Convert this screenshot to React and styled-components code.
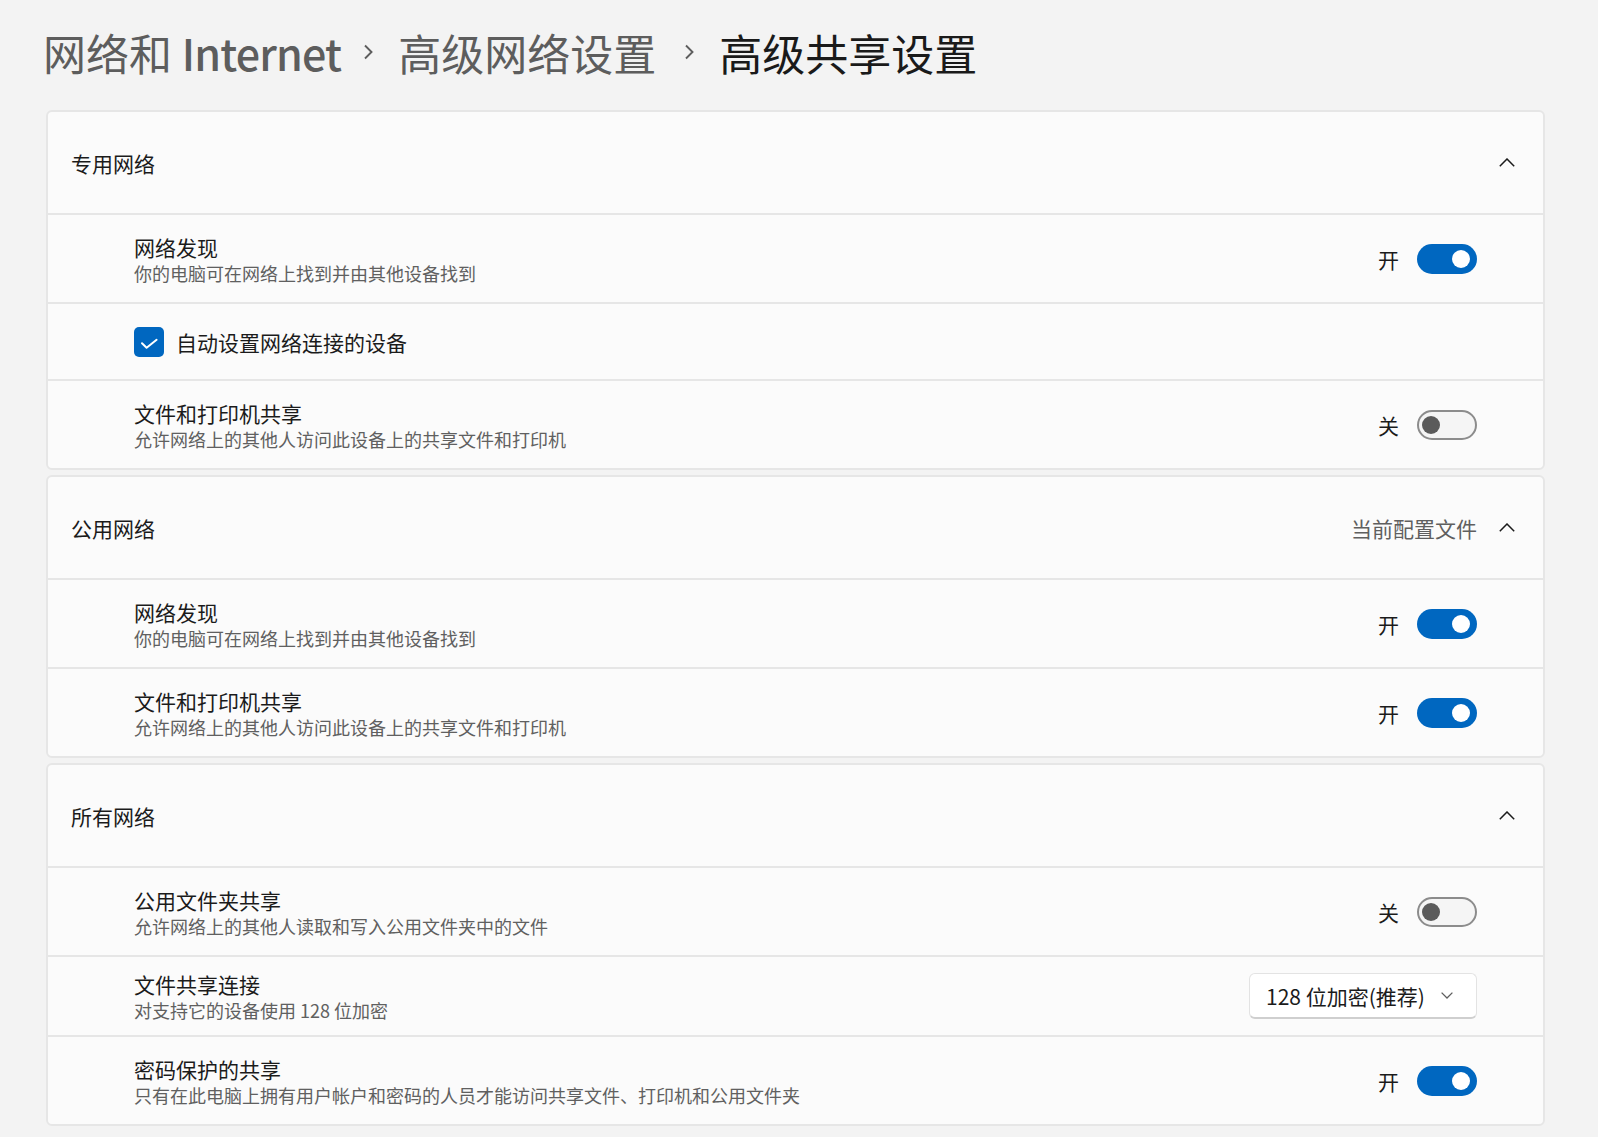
import React from "react";
import styled, { createGlobalStyle } from "styled-components";

const Global = createGlobalStyle`
  html, body {
    margin: 0;
    padding: 0;
    background: #f3f3f3;
  }
  body {
    font-family: "Noto Sans CJK SC", "Noto Sans", sans-serif;
    color: #1b1b1b;
    -webkit-font-smoothing: antialiased;
  }
  * { box-sizing: border-box; }
`;

const Page = styled.div`
  padding: 28px 53px 10px 46px;
  min-height: 1137px;
`;

const Breadcrumb = styled.div`
  display: flex;
  align-items: center;
  height: 48px;
  margin: 0 0 34px -3px;
  font-size: 43px;
  line-height: 48px;
`;

const Crumb = styled.span`
  color: ${(p) => (p.$current ? "#1a1a1a" : "#5d5d5d")};
  white-space: nowrap;
`;

const Latin = styled.span`
  font-weight: 500;
  letter-spacing: -0.8px;
`;

const SepIcon = styled.svg`
  width: 10px;
  height: 16px;
  margin: 0 25px 0 ${(p) => p.$left}px;
  flex: none;
`;

const Cards = styled.div`
  display: flex;
  flex-direction: column;
  gap: 5px;
`;

const Card = styled.section`
  background: #fbfbfb;
  border: 2px solid #e6e6e6;
  border-radius: 6px;
  overflow: hidden;
`;

const Header = styled.div`
  height: 101px;
  display: flex;
  align-items: center;
  justify-content: space-between;
  padding: 0 28px 0 23px;
`;

const HeaderTitle = styled.div`
  font-size: 21px;
  line-height: 28px;
  color: #1b1b1b;
`;

const HeaderRight = styled.div`
  display: flex;
  align-items: center;
  gap: 22px;
`;

const Meta = styled.span`
  font-size: 21px;
  line-height: 28px;
  color: #5f5f5f;
`;

const Row = styled.div`
  height: ${(p) => p.$h || 89}px;
  border-top: 2px solid #e6e6e6;
  display: flex;
  align-items: center;
  justify-content: space-between;
  padding: 0 66px 0 86px;
`;

const TextBlock = styled.div`
  display: flex;
  flex-direction: column;
`;

const Title = styled.div`
  font-size: 21px;
  line-height: 28px;
  color: #1b1b1b;
`;

const Desc = styled.div`
  font-size: 18px;
  line-height: 24px;
  color: #606060;
`;

const Control = styled.div`
  display: flex;
  align-items: center;
  gap: 18px;
`;

const StateLabel = styled.span`
  font-size: 21px;
  line-height: 28px;
  color: #1b1b1b;
`;

const Track = styled.div`
  width: 60px;
  height: 30px;
  border-radius: 15px;
  display: flex;
  align-items: center;
  justify-content: ${(p) => (p.$on ? "flex-end" : "flex-start")};
  padding: ${(p) => (p.$on ? "0 7px" : "0 3px")};
  background: ${(p) => (p.$on ? "#0067c0" : "#f5f5f5")};
  border: ${(p) => (p.$on ? "none" : "2px solid #8c8c8c")};
`;

const Knob = styled.div`
  width: 18px;
  height: 18px;
  border-radius: 50%;
  background: ${(p) => (p.$on ? "#ffffff" : "#5b5b5b")};
`;

const CheckLine = styled.label`
  display: flex;
  align-items: center;
  gap: 12px;
`;

const Box = styled.div`
  width: 30px;
  height: 30px;
  border-radius: 5px;
  background: #0067c0;
  display: flex;
  align-items: center;
  justify-content: center;
`;

const Select = styled.div`
  width: 228px;
  height: 46px;
  background: #ffffff;
  border: 1px solid #e3e3e3;
  border-bottom: 2px solid #cfcfcf;
  border-radius: 6px;
  display: flex;
  align-items: center;
  justify-content: space-between;
  padding: 0 23px 0 16px;
  font-size: 21px;
  color: #1b1b1b;
`;

const Chevron = ({ dir = "up" }) =>
  dir === "up" ? (
    <svg width="16" height="9" viewBox="0 0 16 9">
      <path d="M0.8 8.2 L8 1 L15.2 8.2" fill="none" stroke="#1b1b1b" strokeWidth="1.5" />
    </svg>
  ) : (
    <svg width="12" height="7" viewBox="0 0 12 7">
      <path d="M0.6 0.6 L6 6 L11.4 0.6" fill="none" stroke="#5f5f5f" strokeWidth="1.3" />
    </svg>
  );

const Sep = ({ left = 28 }) => (
  <SepIcon viewBox="0 0 10 16" $left={left}>
    <path d="M2 1.5 L8.5 8 L2 14.5" fill="none" stroke="#5d5d5d" strokeWidth="1.9" />
  </SepIcon>
);

const Toggle = ({ on }) => (
  <Control>
    <StateLabel>{on ? "开" : "关"}</StateLabel>
    <Track $on={on}>
      <Knob $on={on} />
    </Track>
  </Control>
);

const SettingRow = ({ title, desc, children, h }) => (
  <Row $h={h}>
    <TextBlock>
      <Title>{title}</Title>
      <Desc>{desc}</Desc>
    </TextBlock>
    {children}
  </Row>
);

const Section = ({ title, meta, children }) => (
  <Card>
    <Header>
      <HeaderTitle>{title}</HeaderTitle>
      <HeaderRight>
        {meta && <Meta>{meta}</Meta>}
        <Chevron dir="up" />
      </HeaderRight>
    </Header>
    {children}
  </Card>
);

export default function App() {
  return (
    <Page>
      <Global />
      <Breadcrumb>
        <Crumb>
          网络和 <Latin>Internet</Latin>
        </Crumb>
        <Sep left={22} />
        <Crumb>高级网络设置</Crumb>
        <Sep left={28} />
        <Crumb $current>高级共享设置</Crumb>
      </Breadcrumb>
      <Cards>
        <Section title="专用网络">
          <SettingRow title="网络发现" desc="你的电脑可在网络上找到并由其他设备找到">
            <Toggle on />
          </SettingRow>
          <Row $h={77}>
            <CheckLine>
              <Box>
                <svg width="30" height="30" viewBox="0 0 30 30">
                  <path d="M8 16.3 L12.6 20.8 L22.6 12.8" fill="none" stroke="#fff" strokeWidth="2" strokeLinecap="round" strokeLinejoin="round" />
                </svg>
              </Box>
              <Title>自动设置网络连接的设备</Title>
            </CheckLine>
          </Row>
          <SettingRow title="文件和打印机共享" desc="允许网络上的其他人访问此设备上的共享文件和打印机">
            <Toggle on={false} />
          </SettingRow>
        </Section>
        <Section title="公用网络" meta="当前配置文件">
          <SettingRow title="网络发现" desc="你的电脑可在网络上找到并由其他设备找到">
            <Toggle on />
          </SettingRow>
          <SettingRow title="文件和打印机共享" desc="允许网络上的其他人访问此设备上的共享文件和打印机">
            <Toggle on />
          </SettingRow>
        </Section>
        <Section title="所有网络">
          <SettingRow title="公用文件夹共享" desc="允许网络上的其他人读取和写入公用文件夹中的文件">
            <Toggle on={false} />
          </SettingRow>
          <SettingRow title="文件共享连接" desc="对支持它的设备使用 128 位加密" h={80}>
            <Select>
              <span>128 位加密(推荐)</span>
              <Chevron dir="down" />
            </Select>
          </SettingRow>
          <SettingRow title="密码保护的共享" desc="只有在此电脑上拥有用户帐户和密码的人员才能访问共享文件、打印机和公用文件夹">
            <Toggle on />
          </SettingRow>
        </Section>
      </Cards>
    </Page>
  );
}
